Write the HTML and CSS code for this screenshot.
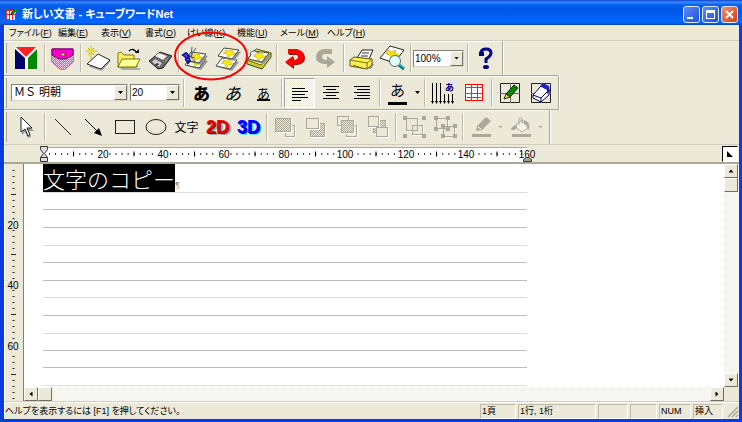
FILE: index.html
```html
<!DOCTYPE html>
<html lang="ja">
<head>
<meta charset="utf-8">
<title>新しい文書 - キューブワードNet</title>
<link rel="stylesheet" href="styles.css">
</head>
<body>
<div class="window">
  <header class="titlebar">
    <svg class="app-icon" width="13" height="14" viewBox="0 0 13 14" shape-rendering="crispEdges"><path fill="#fff" d="M1 3h10v10H1z"/><path d="M1 3.500h8M1.500 3v10M4.500 3v10M7.500 3v10M10.500 6v7M1 7.500h9M1 12.500h3" fill="none" stroke="#e22" /><path d="M6 6l4-5 2 2-4 4z" fill="#080"/><path d="M5 8l1-2 2 1z" fill="#222"/></svg>
    <h1>新しい文書 - キューブワードNet</h1>
    <div class="win-buttons">
      <button class="win-button" aria-label="最小化"><svg width="15" height="15" viewBox="0 0 15 15"><path d="M3 10h6v2H3z" fill="#fff"/></svg></button>
      <button class="win-button" aria-label="最大化"><svg width="15" height="15" viewBox="0 0 15 15"><path d="M3 3h9v9H3zM4 6v5h7V6z" fill="#fff" fill-rule="evenodd"/></svg></button>
      <button class="win-button close" aria-label="閉じる"><svg width="15" height="15" viewBox="0 0 15 15"><path d="M4 4l7 7M11 4l-7 7" stroke="#fff" stroke-width="2"/></svg></button>
    </div>
  </header>

  <nav class="menubar">
    <button>ファイル(<u>F</u>)</button><button>編集(<u>E</u>)</button><button>表示(<u>V</u>)</button><button>書式(<u>O</u>)</button><button>けい線(<u>K</u>)</button><button>機能(<u>U</u>)</button><button>メール(<u>M</u>)</button><button>ヘルプ(<u>H</u>)</button>
  </nav>

  <div class="toolbars">
  <div class="toolbar standard" role="toolbar" aria-label="標準">
    <span class="grip"></span>
    <button class="tool" aria-label="メニュー"><svg viewBox="0 0 31 32"><path fill="#fff" d="M4 5h22v22H4z"/><path fill="#006" d="M4 7l10 9v11H4z"/><path fill="#080" d="M26 7l-9 9v11h9z"/><path fill="#f22" d="M5 5h20L15 15z"/></svg></button>
    <span class="sep"></span>
    <button class="tool" aria-label="ポケット"><svg viewBox="0 0 31 32"><path d="M5 7h21v13l-8 7h-5l-8-7z" fill="#f9c" stroke="#808"/><path d="M5 12h21v8l-8 7h-5l-8-7z" fill="url(#pink)"/><path d="M5 7h21v6l-7 4h-7l-7-4z" fill="#f0c" stroke="#606"/><path d="M14 11h4v3h-4z" fill="#ff0" stroke="#808"/></svg></button>
    <span class="sep"></span>
    <button class="tool" aria-label="新規"><svg viewBox="0 0 31 32"><path d="M6 25l10-12 12 6-9 10z" fill="#aaa"/><path d="M4 22l11-10 12 6-9 9z" fill="#fff" stroke="#222"/><path d="M8 4v13M3 9h11M5 6l6 7M11 6l-6 7" stroke="#aa0" stroke-width="1"/><path d="M8 5v11M4 9h9" stroke="#fe3"/></svg></button>
    <button class="tool" aria-label="開く"><svg viewBox="0 0 31 32"><path d="M6 26h21l-2 2H8z" fill="#aaa"/><path d="M4 25V11l3-1 3 3h10v5l3 1v6z" fill="#fe6" stroke="#770"/><path d="M4 25l4-8h18l-4 8z" fill="#ff9" stroke="#770"/><path d="M15 9q4-4 8 2" fill="none" stroke="#000" stroke-width="1.3"/><path d="M21 11h4V7z"/></svg></button>
    <button class="tool" aria-label="保存"><svg viewBox="0 0 31 32"><path d="M4 19l11-9 12 4-9 12-5 1z" fill="#666" stroke="#222"/><path d="M10 14l4-3 8 3-4 4z" fill="#eee"/><path d="M7 20l3-3 7 4-3 4z" fill="#ccc"/><path d="M12 21l2 1-2 2-2-1z" fill="#333"/><path d="M20 18l4-3-4 6z" fill="#999"/></svg></button>
    <span class="sep"></span>
    <button class="tool" aria-label="切り取り"><svg viewBox="0 0 31 32"><use href="#sheet" x="0" y="5"/><use href="#sheet" x="0" y="0"/><path d="M4 13l10 3M11 5l-1 10 4 5M9 15l6-9" fill="none" stroke="#556" stroke-width="1"/><path d="M2 13l3-2 3 3-2 2zM5 17l3-1 1 3-2 2z" fill="none" stroke="#11a" stroke-width="2"/></svg></button>
    <button class="tool" aria-label="コピー"><svg viewBox="0 0 31 32"><use href="#sheet" x="0" y="6"/><use href="#sheet" x="2" y="-4"/></svg></button>
    <button class="tool" aria-label="貼り付け"><svg viewBox="0 0 31 32"><path d="M4 18L13 7l15 4v4L19 27 4 22z" fill="#cc3" stroke="#440"/><path d="M4 18L13 7l15 4-10 12z" fill="#ff8" stroke="#660"/><use href="#sheet" x="1" y="-1"/><path d="M7 13q1-5 5-4l4 2" fill="#eee" stroke="#555"/></svg></button>
    <span class="sep"></span>
    <button class="tool" aria-label="元に戻す"><svg viewBox="0 0 31 32"><use href="#undo" fill="#910" x="1" y="1"/><use href="#undo" fill="#f00"/></svg></button>
    <button class="tool" disabled aria-label="やり直し"><svg viewBox="0 0 31 32"><g transform="translate(31 0) scale(-1 1)"><use href="#undo" fill="#aca899"/></g></svg></button>
    <span class="sep"></span>
    <button class="tool" aria-label="印刷"><svg viewBox="0 0 31 32"><path d="M5 22l20 5 3-5-8-3z" fill="#999"/><path d="M11 16l5-8h11l-4 9z" fill="#fff" stroke="#222"/><path d="M16 11h7M15 14h7" stroke="#333"/><path d="M4 18l4-3 18 2v6l-5 4-17-3z" fill="#fe5" stroke="#551"/><path d="M4 18l17 3 5-4M21 21v5M7 23l9 3" fill="none" stroke="#771"/></svg></button>
    <button class="tool" aria-label="印刷プレビュー"><svg viewBox="0 0 31 32"><path d="M3 16L13 4l14 4-10 13z" fill="#fff" stroke="#222"/><path d="M11 8l4 2 4-2-1 3 4 2-5 1-3 3-1-4-4-1z" fill="#fd0" stroke="#a90" stroke-width=".5"/><circle cx="18" cy="19" r="5.500" fill="#dff" stroke="#666"/><path d="M15 17l3-2" stroke="#fff"/><path d="M22 23l5 4" stroke="#077" stroke-width="3"/><path d="M22 22l5 4" stroke="#2df"/></svg></button>
    <span class="sep"></span>
    <span class="combo zoom"><select aria-label="倍率"><option>100%</option></select><i></i></span>
    <span class="sep"></span>
    <button class="tool" aria-label="ヘルプ"><svg viewBox="0 0 31 32"><path d="M11 13V10q1-3 5-3 5 0 5 4 0 3-5 6v4" fill="none" stroke="#008" stroke-width="3"/><path d="M9 10h5v4H9z" fill="#008"/><ellipse cx="16" cy="25" rx="3" ry="2" fill="#008"/></svg></button>
    <svg class="marker" width="76" height="50" viewBox="0 0 76 50"><ellipse cx="38" cy="25" rx="36" ry="23.500" fill="none" stroke="#f00" stroke-width="2"/></svg>
  </div>

  <div class="toolbar format" role="toolbar" aria-label="書式">
    <span class="grip"></span>
    <span class="combo font"><select aria-label="フォント"><option>ＭＳ 明朝</option></select><i></i></span>
    <span class="combo size"><select aria-label="サイズ"><option>20</option></select><i></i></span>
    <span class="sep"></span>
    <button class="tool kana bold">あ</button>
    <button class="tool kana italic">あ</button>
    <button class="tool kana under">あ</button>
    <span class="sep"></span>
    <button class="tool pressed" aria-label="左揃え"><svg viewBox="0 0 31 32" shape-rendering="crispEdges"><path d="M8 10.500h13M8 13.500h16M8 16.500h13M8 19.500h16M8 22.500h9" stroke="#000"/></svg></button>
    <button class="tool" aria-label="中央揃え"><svg viewBox="0 0 31 32" shape-rendering="crispEdges"><path d="M8 9.500h16M11 12.500h10M8 15.500h16M11 18.500h10M8 21.500h16" stroke="#000"/></svg></button>
    <button class="tool" aria-label="右揃え"><svg viewBox="0 0 31 32" shape-rendering="crispEdges"><path d="M8 9.500h16M11 12.500h13M8 15.500h16M11 18.500h13M8 21.500h16" stroke="#000"/></svg></button>
    <span class="sep"></span>
    <button class="tool kana color">あ</button>
    <button class="drop" aria-label="文字色"></button>
    <span class="sep"></span>
    <button class="tool" aria-label="縦書き"><svg viewBox="0 0 31 32"><path d="M5.500 6v20M9.500 6v20M13.500 6v20M17.500 17v9M21.500 17v9M25.500 17v9" stroke="#000"/><path d="M4 24h3l-1.500 3zM8 24h3l-1.500 3zM12 24h3l-1.500 3zM16 24h3l-1.500 3zM20 24h3l-1.500 3zM24 24h3l-1.500 3z"/><text x="18" y="14" class="mini-kana">あ</text></svg></button>
    <button class="tool" aria-label="表"><svg viewBox="0 0 31 32" shape-rendering="crispEdges"><path d="M7.500 7.500h17v16h-17z" fill="#fff" stroke="#f00"/><path d="M7 10.500h18M7 16.500h18M13.500 8v16M19.500 8v16M9 20.500h14" stroke="#f22"/></svg></button>
    <span class="sep"></span>
    <button class="tool" aria-label="けい線を引く"><svg viewBox="0 0 31 32"><path d="M6.500 6.500h19v19h-19z" fill="none" stroke="#222"/><path d="M6 16.500h20M16.500 6v20" stroke="#666"/><path d="M12 17l8-9 4 3-8 9z" fill="#080" stroke="#030"/><path d="M10 22l2-5 4 3z" fill="#fe2" stroke="#220"/></svg></button>
    <button class="tool" aria-label="けい線を消す"><svg viewBox="0 0 31 32"><path d="M6.500 6.500h19v19h-19z" fill="none" stroke="#222"/><path d="M6 16.500h20M16.500 6v20" stroke="#666"/><path d="M8 18l8-9 8 4v5l-8 7-8-4z" fill="#fff" stroke="#006"/><path d="M15 9l3-3 6 3 1 5-3 3v-4z" fill="#22c"/><path d="M8 18l8 3 8-8M16 21v4" fill="none" stroke="#006"/></svg></button>
  </div>

  <div class="toolbar drawing" role="toolbar" aria-label="図形">
    <span class="grip"></span>
    <button class="tool" aria-label="選択"><svg viewBox="0 0 31 32"><path d="M11 8v16l3-3 3 6 3-1-2-6h5z" fill="#999"/><path d="M10 6v15l4-3 3 7 2-1-3-7h5z" fill="#fff" stroke="#222"/></svg></button>
    <span class="sep"></span>
    <button class="tool" aria-label="直線"><svg viewBox="0 0 31 32"><path d="M8 8l16 16" stroke="#222"/></svg></button>
    <button class="tool" aria-label="矢印"><svg viewBox="0 0 31 32"><path d="M7 8l12 12" stroke="#000"/><path d="M24 25l-8-3 5-5z"/></svg></button>
    <button class="tool" aria-label="四角形"><svg viewBox="0 0 31 32" shape-rendering="crispEdges"><path d="M6.500 9.500h19v13h-19z" fill="none" stroke="#222"/></svg></button>
    <button class="tool" aria-label="楕円"><svg viewBox="0 0 31 32"><ellipse cx="16" cy="16" rx="10" ry="7.500" fill="none" stroke="#222"/></svg></button>
    <button class="tool word">文字</button>
    <button class="tool solid red">2D</button>
    <button class="tool solid blue">3D</button>
    <span class="sep"></span>
    <button class="tool" disabled aria-label="最前面へ"><svg viewBox="0 0 31 32" shape-rendering="crispEdges"><path d="M16.500 14.500h9v11h-9z" class="off"/><path d="M6.500 7.500h15v13h-15z" class="off solid-off"/></svg></button>
    <button class="tool" disabled aria-label="最背面へ"><svg viewBox="0 0 31 32" shape-rendering="crispEdges"><path d="M10.500 12.500h14v13h-14z" class="off solid-off"/><path d="M6.500 7.500h12v10h-12z" class="off"/></svg></button>
    <button class="tool" disabled aria-label="前面へ"><svg viewBox="0 0 31 32" shape-rendering="crispEdges"><path d="M6.500 5.500h11v9h-11zM15.500 14.500h10v11h-10z" class="off"/><path d="M10.500 9.500h12v12h-12z" class="off solid-off"/></svg></button>
    <button class="tool" disabled aria-label="背面へ"><svg viewBox="0 0 31 32" shape-rendering="crispEdges"><path d="M11.500 9.500h12v12h-12z" class="off solid-off"/><path d="M6.500 5.500h10v10h-10zM14.500 16.500h11v9h-11z" class="off"/></svg></button>
    <span class="sep"></span>
    <button class="tool" disabled aria-label="グループ化"><svg viewBox="0 0 31 32" shape-rendering="crispEdges"><path d="M8.500 7.500h11v12h-11zM14.500 14.500h10v9h-10z" class="off"/><path d="M5 5h4v4H5zM24 5h4v4h-4zM5 23h4v4H5zM24 23h4v4h-4z" fill="#aca899"/></svg></button>
    <button class="tool" disabled aria-label="グループ解除"><svg viewBox="0 0 31 32" shape-rendering="crispEdges"><path d="M7.500 7.500h11v10h-11zM14.500 15.500h11v10h-11z" class="off"/><path d="M5 5h4v4H5zM17 5h4v4h-4zM5 16h4v4H5zM17 16h4v4h-4zM12 13h4v4h-4zM24 13h4v4h-4zM12 23h4v4h-4zM24 23h4v4h-4z" fill="#aca899"/></svg></button>
    <span class="sep"></span>
    <button class="tool" disabled aria-label="線の色"><svg viewBox="0 0 31 32"><path d="M7 23h19v3H7z" fill="#aca899"/><path d="M11 20l1-5 9-9 5 4-9 9z" fill="#aca899"/><path d="M13 16l3 2" stroke="#fff"/></svg></button>
    <button class="drop off-drop" disabled aria-label="線の色の選択"></button>
    <button class="tool" disabled aria-label="塗り色"><svg viewBox="0 0 31 32"><path d="M7 23h19v3H7z" fill="#aca899"/><path d="M9 15l8-6 6 8-6 4z" fill="#f6f4ec" stroke="#aca899"/><path d="M14 14V8q2-3 3 0v5" fill="none" stroke="#aca899"/><path d="M19 9q7 2 5 11-1-6-5-8zM6 19q0-4 7-5l-3 5z" fill="#aca899"/></svg></button>
    <button class="drop off-drop" disabled aria-label="塗り色の選択"></button>
  </div>
  </div>

  <div class="ruler-row">
    <svg class="ruler" width="500" height="19" viewBox="0 0 500 19">
      <path d="M5 2h484v15H5z" fill="#fff"/><path d="M5 2.500h484" stroke="#aca899"/>
      <path d="M11 9h478" stroke="#333" stroke-width="2" stroke-dasharray="1 5.050"/>
      <path d="M35 9h454" stroke="#000" stroke-width="5" stroke-dasharray="1 59.500"/>
      <path d="M58 4h13v11H58zM119 4h13v11h-13zM179 4h13v11h-13zM240 4h13v11h-13zM298 4h18v11h-18zM359 4h18v11h-18zM419 4h18v11h-18z" fill="#fff"/>
      <g class="scale" text-anchor="middle"><text x="65" y="13">20</text><text x="125" y="13">40</text><text x="186" y="13">60</text><text x="246" y="13">80</text><text x="307" y="13">100</text><text x="368" y="13">120</text><text x="428" y="13">140</text><text x="489" y="13">160</text></g>
      <path d="M2.500 1.500h7v3l-3 4 3 4v4h-7v-4l3-4-3-4zM2.500 12.500h7" fill="#ddd" stroke="#333"/>
      <path d="M485.500 16.500v-2l3-2h2l3 2v2z" fill="#aca899" stroke="#333"/>
    </svg>
    <button class="corner" aria-label="タブ"><svg width="14" height="14" viewBox="0 0 14 14"><path d="M4 4l6 6H4z"/></svg></button>
  </div>

  <main class="work">
    <svg class="vruler" width="19" height="238" viewBox="0 0 19 238">
      <path d="M9.500 6v232" stroke="#222" stroke-width="2" stroke-dasharray="1 5"/>
      <path d="M9.500 30v208" stroke="#222" stroke-width="5" stroke-dasharray="1 59"/>
      <path d="M3 55h14v11H3zM3 115h14v11H3zM3 176h14v11H3z" fill="#ece9d8"/>
      <g class="scale" text-anchor="middle"><text x="9" y="65">20</text><text x="9" y="125">40</text><text x="9" y="186">60</text></g>
    </svg>
    <div class="pane">
      <section class="page">
        <p class="line"><mark>文字のコピー</mark><span>¶</span></p>
        <svg class="rules" width="484" height="194" viewBox="0 0 484 194" shape-rendering="crispEdges"><path d="M0 .5h484M0 53.500h484M0 105.500h484M0 141.500h484M0 193.500h484" stroke="#ddd"/><path d="M0 17.500h484M0 35.500h484M0 70.500h484M0 88.500h484M0 123.500h484M0 158.500h484M0 175.500h484" stroke="#bbb"/></svg>
      </section>
      <div class="scroll vertical"><button class="sb up" aria-label="上へ"></button><span class="thumb"></span><button class="sb down end" aria-label="下へ"></button></div>
      <div class="scroll horizontal"><button class="sb left" aria-label="左へ"></button><span class="thumb"></span><button class="sb right end" aria-label="右へ"></button></div>
    </div>
  </main>

  <footer class="status">
    <span class="hint">ヘルプを表示するには [F1] を押してください。</span>
    <span class="cell">1頁</span><span class="cell">1行, 1桁</span><span class="cell"></span><span class="cell"></span><span class="cell num">NUM</span><span class="cell">挿入</span>
    <svg width="14" height="14" viewBox="0 0 14 14"><path d="M3 13L13 3M7 13l6-6M11 13l2-2" stroke="#aca899" stroke-width="1.500"/></svg>
  </footer>
</div>

<svg class="defs" width="0" height="0" aria-hidden="true">
  <defs>
    <pattern id="pink" width="2" height="2" patternUnits="userSpaceOnUse"><path fill="#fde" d="M0 0h2v2H0z"/><path fill="#f4c" d="M0 0h1v1H0zM1 1h1v1H1z"/></pattern>
    <pattern id="dither" width="2" height="2" patternUnits="userSpaceOnUse"><path fill="#ece9d8" d="M0 0h2v2H0z"/><path fill="#aca899" d="M0 0h1v1H0zM1 1h1v1H1z"/></pattern>
    <symbol id="sheet" viewBox="0 0 31 32" width="31" height="32" overflow="visible"><path d="M6 19l4-8 17 3-7 9z" fill="#999"/><path d="M4 18l6-8 15 2-7 9z" fill="#fff" stroke="#444"/><path d="M11 12l4 1 4-2-1 3 4 2-5 1-3 3-1-4-4-1 3-1z" fill="#fe0" stroke="#a90" stroke-width=".5"/></symbol>
    <symbol id="undo" viewBox="0 0 31 32" width="31" height="32"><path d="M9 7h9q7 2 7 8 0 6-8 7h-3v4l-8-6 8-6v4h2q3-1 3-3 0-3-3-3H9z"/></symbol>
  </defs>
</svg>
</body>
</html>
```
FILE: styles.css
```css
* { box-sizing: border-box; }

body {
  margin: 0;
  font: 9px/14px "Liberation Sans", "Noto Sans CJK JP", sans-serif;
  color: #000;
  background: #0831d9;
}

button, select { font: inherit; color: inherit; margin: 0; padding: 0; border: 0; background: none; }
svg { display: block; flex: none; }
.defs { position: absolute; }

.window {
  display: flex;
  flex-direction: column;
  min-height: 100vh;
  background: #ece9d8;
  border: solid #0a3be0;
  border-width: 0 3px 3px 4px;
  border-radius: 6px 6px 0 0;
  box-shadow: inset 1px 0 #fff;
}

.titlebar {
  display: flex;
  align-items: center;
  height: 25px;
  margin: 0 -3px 0 -4px;
  padding: 3px 4px 0 5px;
  color: #fff;
  background: linear-gradient(#0a3fd0 0, #3a8cff 2px, #0560ee 5px, #0055e5 10px, #0266fc 20px, #0264f8 23px, #0a40b8 25px);
}
.titlebar h1 {
  flex: 1;
  margin: 0 0 0 4px;
  font: bold 11px/16px "Liberation Sans", "Noto Sans CJK JP", sans-serif;
  font-feature-settings: "palt";
}
.win-buttons { display: flex; gap: 2px; }
.win-button {
  width: 17px;
  height: 17px;
  border: 1px solid #dfe8ff;
  border-radius: 3px;
  background: linear-gradient(135deg, #5c8cf8, #1f4fd8);
}
.win-button.close { background: linear-gradient(135deg, #f09070, #d83c10); }

.menubar {
  display: grid;
  grid-template-columns: 49px 43px 44px 42px 50px 43px 47px auto;
  justify-content: start;
  height: 16px;
  padding-left: 5px;
  border-bottom: 1px solid #d0cdbd;
  font-feature-settings: "palt";
}
.menubar button { text-align: left; line-height: 12px; white-space: nowrap; }
.menubar u { text-underline-offset: 1px; }

.toolbars { display: flex; flex-direction: column; align-items: flex-start; border-bottom: 1px solid #d0cdbd; }
.toolbar {
  position: relative;
  display: flex;
  align-items: center;
  height: 34px;
  border: solid #aca899;
  border-width: 0 1px 1px 0;
  box-shadow: inset 0 1px #fff, 1px 0 #fff;
}
.standard { width: 499px; height: 35px; }
.format { width: 555px; }
.drawing { width: 546px; border-bottom: 0; }
.standard::after {
  content: "";
  position: absolute;
  left: 100%;
  bottom: -1px;
  width: 56px;
  height: 1px;
  background: #aca899;
}
.grip { flex: none; width: 7px; height: 30px; border-left: 1px solid #fff; box-shadow: inset -4px 0 #ece9d8, inset -5px 0 #aca899; }
.sep { flex: none; width: 5px; height: 28px; background: linear-gradient(90deg, #ece9d8 2px, #bdb9a9 2px, #bdb9a9 3px, #fff 3px, #fff 4px, #ece9d8 4px); }
.tool { flex: none; width: 31px; height: 32px; line-height: 32px; text-align: center; white-space: nowrap; }
.tool svg { width: 31px; height: 32px; }
.pressed {
  height: 30px;
  border: 1px solid;
  border-color: #aca899 #fff #fff #aca899;
  background: repeating-conic-gradient(#fff 0 25%, #ece9d8 0 50%) 0 0 / 2px 2px;
}
.pressed svg { margin: -1px; }

.marker { position: absolute; left: 169px; top: -10px; z-index: 1; pointer-events: none; }

.kana { font: 17px/20px "Noto Sans CJK JP", sans-serif; }
.bold { font-weight: 900; }
.italic { font-style: italic; }
.under { font-size: 13px; text-decoration: underline; text-decoration-thickness: 2px; text-underline-offset: 1px; }
.color { background: linear-gradient(#000, #000) 6px 25px / 19px 3px no-repeat; font-size: 15px; padding-bottom: 6px; }
.mini-kana { font: bold 9px "Noto Sans CJK JP", sans-serif; fill: #008; }
.word { font: 12px/32px "Noto Sans CJK JP", sans-serif; }
.solid { font: bold 18px/32px "Liberation Sans Narrow", "Liberation Sans", sans-serif; }
.red { color: #e00; text-shadow: 1px 1px #700, 3px 2px #aaa; }
.blue { color: #00f; text-shadow: 1px 1px #00f, 2px 2px #4ee; }
.off { fill: #ece9d8; stroke: #aca899; filter: drop-shadow(1px 1px #fff); }
.solid-off { fill: url(#dither); }

.drop { flex: none; width: 9px; height: 30px; }
.drop::before {
  content: "";
  display: block;
  margin: 0 auto;
  width: 5px;
  height: 3px;
  background: currentColor;
  clip-path: polygon(0 0, 100% 0, 50% 100%);
}
.off-drop { color: #aca899; }

.combo {
  display: flex;
  flex: none;
  height: 17px;
  border: 1px solid;
  border-color: #808078 #d8d5c8 #d8d5c8 #808078;
  background: #fff;
}
.combo select { flex: 1; min-width: 0; appearance: none; padding-left: 1px; font: 10px/15px "Liberation Sans", "Noto Sans CJK JP", sans-serif; }
.combo i {
  display: grid;
  place-items: center;
  width: 13px;
  background: #ece9d8;
  border: 1px solid;
  border-color: #fff #716f64 #716f64 #fff;
  pointer-events: none;
}
.combo i::before { content: ""; width: 5px; height: 3px; background: #000; clip-path: polygon(0 0, 100% 0, 50% 100%); }
.zoom { width: 51px; margin-right: 1px; }
.font { width: 117px; margin-right: 2px; }
.size { width: 50px; margin-right: 1px; }
.font select { padding-left: 2px; font-size: 11px; }

.ruler-row {
  display: flex;
  justify-content: space-between;
  align-items: center;
  height: 19px;
  padding: 0 1px 0 34px;
  border-bottom: 2px solid #aca899;
}
.ruler { margin-bottom: -2px; }
.scale { font: 10px "Liberation Sans", sans-serif; }
.corner { width: 16px; height: 16px; background: #fff; border: 1px solid; border-color: #000 #fff #fff #000; }

.work { display: flex; flex: 1; }
.pane {
  flex: 1;
  display: grid;
  grid-template: 1fr 15px / 1fr 15px;
  border-left: 1px solid #808078;
}
.page { padding-left: 19px; background: #fff; }
.line { display: flex; align-items: flex-end; margin: 0; height: 28px; color: #888; }
.line mark { color: #fff; background: #000; font: 22px/28px "Noto Sans CJK JP", sans-serif; font-weight: 300; }

.scroll { display: flex; background: repeating-conic-gradient(#fff 0 25%, #f0eee2 0 50%) 0 0 / 2px 2px; }
.vertical { flex-direction: column; }
.sb, .thumb {
  display: grid;
  place-items: center;
  width: 14px;
  height: 14px;
  background: #ece9d8;
  border: 1px solid;
  border-color: #fff #716f64 #716f64 #fff;
}
.sb::before { content: ""; width: 5px; height: 5px; background: #000; }
.end { margin: auto 0 0 0; }
.horizontal .end { margin: 0 0 0 auto; }
.up::before { clip-path: polygon(0 80%, 50% 20%, 100% 80%); }
.down::before { clip-path: polygon(0 20%, 50% 80%, 100% 20%); }
.left::before { clip-path: polygon(80% 0, 20% 50%, 80% 100%); }
.right::before { clip-path: polygon(20% 0, 80% 50%, 20% 100%); }

.status {
  display: grid;
  grid-template-columns: 1fr 36px 78px 30px 27px 32px 30px 14px;
  gap: 2px;
  height: 17px;
  padding: 1px 0 1px 1px;
  border-top: 1px solid #fff;
  box-shadow: 0 -1px #d0cdbd;
  font-feature-settings: "palt";
}
.cell { padding-left: 1px; border: 1px solid; border-color: #c0bdad #fff #fff #c0bdad; line-height: 13px; white-space: nowrap; }
.hint { white-space: nowrap; }
```
